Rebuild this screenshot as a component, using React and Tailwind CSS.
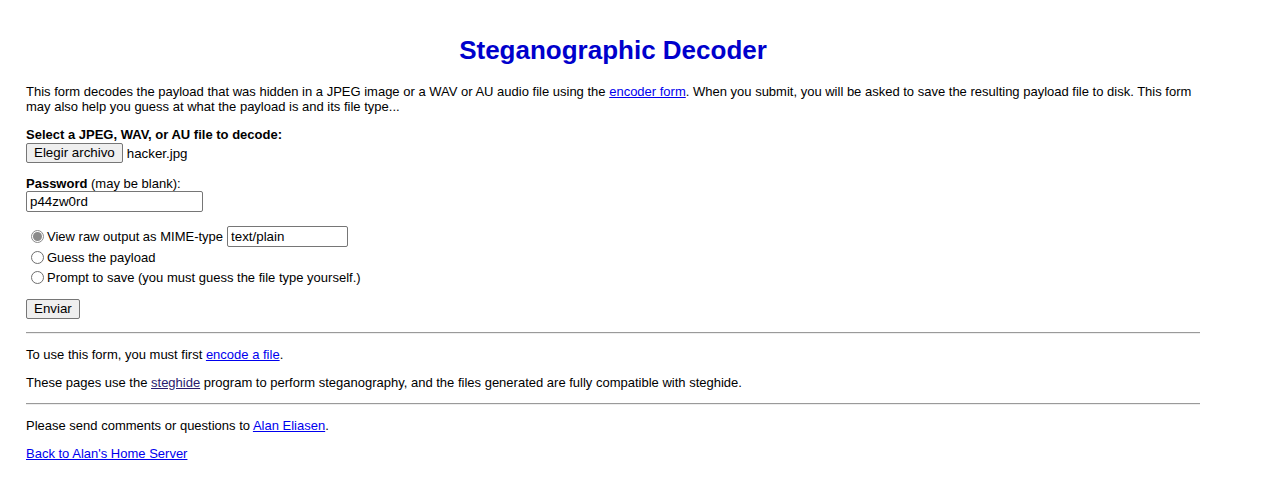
const font = { fontFamily: '"Liberation Sans", Arial, sans-serif' };

const Link = ({ children, visited }) => (
  <a
    href="#"
    className={
      visited
        ? "text-[#2b1a6e] underline"
        : "text-[#0000ee] underline"
    }
  >
    {children}
  </a>
);

const Radio = ({ checked }) => (
  <span
    className={
      checked
        ? "ml-[5px] mr-[3px] flex h-[13px] w-[13px] shrink-0 items-center justify-center rounded-full border border-[#8a8a8a] bg-white"
        : "ml-[5px] mr-[3px] flex h-[13px] w-[13px] shrink-0 items-center justify-center rounded-full border border-[#6f6f6f] bg-white"
    }
  >
    {checked && <span className="h-[9px] w-[9px] rounded-full bg-[#8a8a8a]" />}
  </span>
);

const Divider = () => (
  <div className="h-[2px] border-t border-b border-t-[#9a9a9a] border-b-[#eeeeee]" />
);

export default function App() {
  return (
    <div className="min-h-[481px] bg-white text-black" style={font}>
      <div className="ml-[26px] w-[1174px] pt-[35px] text-[13px] leading-[15px]">
        {/* title */}
        <h1 className="text-center text-[26px] font-bold leading-[30px] text-[#0000cc]">
          Steganographic Decoder
        </h1>

        <p className="mt-[19px]">
          This form decodes the payload that was hidden in a JPEG image or a WAV or AU audio file using the{" "}
          <Link>encoder form</Link>. When you submit, you will be asked to save the resulting payload file to disk. This form may also help you guess at what the payload is and its file type...
        </p>

        {/* file */}
        <p className="mt-[13px] font-bold">Select a JPEG, WAV, or AU file to decode:</p>
        <div className="mt-[1px] flex h-[20px] items-center text-[13.33px]">
          <button className="h-[20px] rounded-[2px] border border-[#767676] bg-[#efefef] px-[7px] leading-[18px]">
            Elegir archivo
          </button>
          <span className="ml-[4px]">hacker.jpg</span>
        </div>

        {/* password */}
        <p className="mt-[13px]">
          <b>Password</b> (may be blank):
        </p>
        <input
          readOnly
          value="p44zw0rd"
          className="block h-[21px] w-[177px] rounded-[2px] border border-[#767676] px-[3px] text-[13.33px] outline-none"
        />

        {/* output mode */}
        <div className="mt-[14px]">
          <div className="flex h-[21px] items-center">
            <Radio checked />
            <span>View raw output as MIME-type</span>
            <input
              readOnly
              value="text/plain"
              className="ml-[4px] h-[21px] w-[121px] rounded-[2px] border border-[#767676] px-[3px] text-[13.33px] outline-none"
            />
          </div>
          <div className="flex h-[20px] items-center">
            <Radio />
            <span>Guess the payload</span>
          </div>
          <div className="flex h-[20px] items-center">
            <Radio />
            <span>Prompt to save (you must guess the file type yourself.)</span>
          </div>
        </div>

        <button className="mt-[12px] block h-[20px] rounded-[2px] border border-[#767676] bg-[#efefef] px-[7px] text-[13.33px] leading-[18px]">
          Enviar
        </button>

        <div className="mt-[13px]">
          <Divider />
        </div>

        <p className="mt-[13px]">
          To use this form, you must first <Link>encode a file</Link>.
        </p>
        <p className="mt-[13px]">
          These pages use the <Link visited>steghide</Link> program to perform steganography, and the files generated are fully compatible with steghide.
        </p>

        <div className="mt-[13px]">
          <Divider />
        </div>

        <p className="mt-[13px]">
          Please send comments or questions to <Link>Alan Eliasen</Link>.
        </p>
        <p className="mt-[13px]">
          <Link>Back to Alan's Home Server</Link>
        </p>
      </div>
    </div>
  );
}
